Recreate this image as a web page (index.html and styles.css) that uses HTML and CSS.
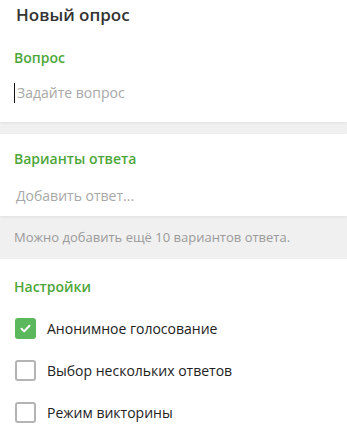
FILE: index.html
```html
<!DOCTYPE html>
<html lang="ru">
<head>
    <meta charset="UTF-8">
    <meta name="viewport" content="width=device-width, initial-scale=1.0">
    <title>Новый опрос</title>
    <link rel="stylesheet" href="styles.css">
</head>
<body>
    <div class="card card-question">
        <h1 class="title">Новый опрос</h1>
        <div class="section-label">Вопрос</div>
        <div class="field">
            <span class="cursor"></span>
            <span class="placeholder">Задайте вопрос</span>
        </div>
    </div>

    <div class="card card-answers">
        <div class="section-label">Варианты ответа</div>
        <div class="field">
            <span class="placeholder">Добавить ответ...</span>
        </div>
    </div>

    <div class="hint">Можно добавить ещё 10 вариантов ответа.</div>

    <div class="card card-settings">
        <div class="section-label">Настройки</div>
        <div class="option">
            <span class="checkbox checked">
                <svg width="13" height="13" viewBox="0 0 13 13"><path d="M2.5 6.8 L5.2 9.3 L10.5 3.8" fill="none" stroke="#fff" stroke-width="2" stroke-linecap="round" stroke-linejoin="round"/></svg>
            </span>
            <span class="option-text">Анонимное голосование</span>
        </div>
        <div class="option">
            <span class="checkbox"></span>
            <span class="option-text">Выбор нескольких ответов</span>
        </div>
        <div class="option">
            <span class="checkbox"></span>
            <span class="option-text">Режим викторины</span>
        </div>
    </div>
</body>
</html>
```

FILE: styles.css
```css
body {
    font-family: "Open Sans", "Noto Sans", sans-serif;
    margin: 0;
    background-color: #f0f0f0;
    height: 436px;
    display: flex;
    flex-direction: column;
    overflow: hidden;
}
.card {
    background-color: #fff;
    padding: 0 15px 0 14px;
    box-shadow: 0 1px 3px rgba(0, 0, 0, 0.07);
}
.card-question {
    padding-bottom: 19px;
    margin-bottom: 12px;
}
.card-answers {
    padding-top: 15px;
    padding-bottom: 10px;
}
.card-settings {
    padding-top: 18px;
    flex: 1;
    box-shadow: none;
}
.title {
    margin: 0 0 19px 2px;
    font-size: 17px;
    line-height: 29px;
    font-weight: 600;
    color: #333;
}
.section-label {
    font-size: 14px;
    line-height: 20px;
    font-weight: 600;
    color: #4ea63a;
}
.card-question .field {
    margin-top: 15px;
}
.card-answers .field {
    margin-top: 17px;
    padding-left: 2px;
}
.field {
    display: flex;
    align-items: center;
    font-size: 14px;
    line-height: 20px;
}
.cursor {
    width: 1px;
    height: 20px;
    background-color: #111;
    margin-right: 2px;
}
.placeholder {
    color: #a8a8a8;
}
.hint {
    padding: 12px 14px 13px;
    font-size: 13px;
    line-height: 18px;
    color: #9a9a9a;
}
.option {
    display: flex;
    align-items: center;
    height: 42px;
}
.card-settings .section-label {
    margin-bottom: 10px;
}
.checkbox {
    box-sizing: border-box;
    width: 21px;
    height: 21px;
    margin-left: 1px;
    border: 2px solid #b4b4b4;
    border-radius: 3px;
    display: flex;
    align-items: center;
    justify-content: center;
}
.checkbox.checked {
    border-color: #5cb85c;
    background-color: #5cb85c;
}
.option-text {
    margin-left: 11px;
    font-size: 14px;
    color: #222;
}
```
